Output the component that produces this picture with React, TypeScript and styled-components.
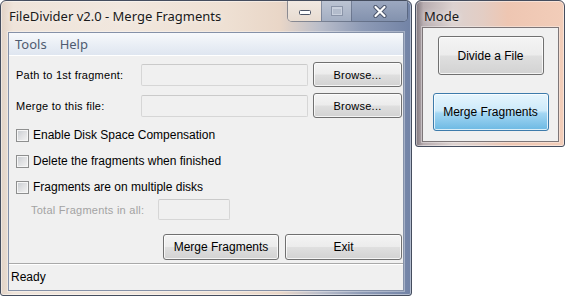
import React from "react";
import styled, { createGlobalStyle } from "styled-components";

const GlobalStyle = createGlobalStyle`
  html, body {
    margin: 0;
    padding: 0;
    background: #ffffff;
  }
  body {
    font-family: "Liberation Sans", Arial, sans-serif;
  }
`;

const Desktop = styled.div`
  display: flex;
  align-items: flex-start;
  gap: 3px;
  width: 565px;
  height: 297px;
  overflow: hidden;
`;

// aero-ish window frame, tone picks the glass tint
const Frame = styled.div<{ $w: number; $h: number; $tone: "main" | "mode" }>`
  box-sizing: border-box;
  width: ${(p) => p.$w}px;
  height: ${(p) => p.$h}px;
  display: flex;
  flex-direction: column;
  border: 1px solid #454d5e;
  border-radius: 6px 6px 3px 3px;
  padding: ${(p) => (p.$tone === "main" ? "0 7px 4px 7px" : "0 5px 4px 6px")};
  background: ${(p) =>
    p.$tone === "main"
      ? "linear-gradient(90deg, #e2d3c6 0%, #efe4da 3%, #f1e7de 30%, #eee0d3 55%, #e9d6c7 68%, #b9bdca 78%, #8e9bb6 88%, #7283a6 100%)"
      : "linear-gradient(90deg, #7f767c 0%, #b8adb0 5%, #dcd2d0 25%, #e3cdc4 45%, #eec6b2 62%, #f2cdb9 100%)"};
  box-shadow: inset 0 0 0 1px rgba(255, 255, 255, 0.45);
`;

const TitleBar = styled.div<{ $h: number }>`
  display: flex;
  justify-content: space-between;
  align-items: flex-start;
  height: ${(p) => p.$h}px;
  flex: none;
`;

const Title = styled.div<{ $pl?: number }>`
  font-family: "Noto Sans", "Open Sans", sans-serif;
  font-size: 13px;
  line-height: 18px;
  padding-top: 6px;
  padding-left: ${(p) => p.$pl ?? 1}px;
  color: #1a1a1a;
  white-space: nowrap;
  text-shadow: 0 0 6px rgba(255, 255, 255, 0.9);
`;

const Controls = styled.div`
  display: flex;
  margin-right: -4px;
  border: 1px solid rgba(70, 80, 100, 0.55);
  border-top: none;
  border-radius: 0 0 5px 5px;
  overflow: hidden;
  box-shadow: inset 0 0 0 1px rgba(255, 255, 255, 0.5);
`;

const CtrlBtn = styled.div<{ $w: number; $kind: "min" | "max" | "close" }>`
  width: ${(p) => p.$w}px;
  height: 20px;
  display: flex;
  align-items: center;
  justify-content: center;
  border-left: ${(p) => (p.$kind === "min" ? "none" : "1px solid rgba(70, 80, 100, 0.45)")};
  background: ${(p) =>
    p.$kind === "min"
      ? "linear-gradient(#f1e9e2, #e8dcd1)"
      : p.$kind === "max"
      ? "linear-gradient(#bcc4d3, #a3aec2)"
      : "linear-gradient(#9ca8c0, #8392ae)"};
`;

const Client = styled.div<{ $tone: "main" | "mode" }>`
  flex: 1;
  display: flex;
  flex-direction: column;
  background: #f0f0f0;
  border: 1px solid ${(p) => (p.$tone === "main" ? "#8591a8" : "#7d7678")};
  box-shadow: 0 0 0 1px rgba(255, 255, 255, 0.35);
  min-height: 0;
`;

const MenuBar = styled.div`
  display: flex;
  height: 22px;
  flex: none;
  align-items: center;
  background: linear-gradient(#f7f9fc 0%, #e9eef5 55%, #dfe6f0 100%);
  border-bottom: 1px solid #ffffff;
`;

const MenuItem = styled.span`
  font-family: "Noto Sans", "Open Sans", sans-serif;
  font-size: 13px;
  color: #4f5b70;
  padding: 0 7px 0 6px;
`;

const Form = styled.div`
  flex: 1;
  display: flex;
  flex-direction: column;
  padding: 6px 1px 3px 7px;
`;

const Row = styled.div<{ $h: number; $mt?: number }>`
  display: flex;
  align-items: center;
  height: ${(p) => p.$h}px;
  margin-top: ${(p) => p.$mt ?? 0}px;
  flex: none;
`;

const Label = styled.span<{ $w: number; $disabled?: boolean; $ml?: number }>`
  width: ${(p) => p.$w}px;
  margin-left: ${(p) => p.$ml ?? 0}px;
  flex: none;
  font-size: 11px;
  letter-spacing: 0.25px;
  color: ${(p) => (p.$disabled ? "#a3a3a3" : "#000000")};
  white-space: nowrap;
`;

const TextBox = styled.input<{ $w: number; $h: number }>`
  box-sizing: border-box;
  width: ${(p) => p.$w}px;
  height: ${(p) => p.$h}px;
  flex: none;
  margin: 0;
  padding: 0 3px;
  background: #f0f0f0;
  border: 1px solid #d6d6d6;
  border-top-color: #cacaca;
  border-radius: 2px;
  outline: none;
`;

const Button = styled.button<{ $w: number; $h: number; $ml?: number; $fs?: number; $selected?: boolean }>`
  box-sizing: border-box;
  width: ${(p) => p.$w}px;
  height: ${(p) => p.$h}px;
  margin-left: ${(p) => p.$ml ?? 0}px;
  flex: none;
  padding: 0;
  font-family: "Liberation Sans", Arial, sans-serif;
  font-size: ${(p) => p.$fs ?? 11}px;
  letter-spacing: ${(p) => ((p.$fs ?? 11) === 11 ? "0.25px" : "0")};
  color: #000;
  border: 1px solid ${(p) => (p.$selected ? "#3d7bab" : "#707070")};
  border-radius: 3px;
  background: ${(p) =>
    p.$selected
      ? "linear-gradient(#e6f5fd 0%, #cdeafa 46%, #a3d6f3 54%, #6cb9e3 100%)"
      : "linear-gradient(#f4f4f4 0%, #ececec 48%, #dfdfdf 52%, #d2d2d2 100%)"};
  box-shadow: inset 0 0 0 1px rgba(255, 255, 255, 0.75);
`;

const CheckRow = styled.label<{ $mt: number }>`
  display: flex;
  align-items: center;
  height: 22px;
  margin-top: ${(p) => p.$mt}px;
  gap: 4px;
  font-size: 12px;
  color: #000;
  flex: none;
`;

const CheckBox = styled.span`
  box-sizing: border-box;
  width: 13px;
  height: 13px;
  flex: none;
  border: 1px solid #8e8f8f;
  background: linear-gradient(135deg, #c6cacf 0%, #dedfe1 45%, #f4f4f4 100%);
  box-shadow: inset 0 0 0 1px #f6f6f6;
`;

const ButtonRow = styled.div`
  display: flex;
  justify-content: flex-end;
  gap: 6px;
  margin-top: auto;
`;

const StatusBar = styled.div`
  height: 26px;
  flex: none;
  display: flex;
  align-items: center;
  padding-left: 2px;
  font-size: 12px;
  color: #000;
  border-top: 1px solid #a9a9a9;
  box-shadow: inset 0 1px 0 #ffffff;
`;

const ModeBody = styled.div`
  display: flex;
  flex-direction: column;
  align-items: center;
  gap: 18px;
  padding-top: 8px;
`;

const MinGlyph = () => (
  <svg width="12" height="8" viewBox="0 0 12 8">
    <rect x="0.5" y="3.5" width="11" height="4" rx="1" fill="#ffffff" stroke="#4d5566" />
  </svg>
);

const MaxGlyph = () => (
  <svg width="12" height="10" viewBox="0 0 12 10">
    <rect x="0.5" y="0.5" width="11" height="9" fill="#c9d0dd" stroke="#8a94a8" />
    <rect x="2" y="3" width="8" height="5" fill="#b3bccc" />
  </svg>
);

const CloseGlyph = () => (
  <svg width="14" height="13" viewBox="0 0 14 13">
    <path d="M2.5 2 L11.5 11 M11.5 2 L2.5 11" stroke="#4c566c" strokeWidth="4.2" strokeLinecap="round" />
    <path d="M2.5 2 L11.5 11 M11.5 2 L2.5 11" stroke="#ffffff" strokeWidth="2.2" strokeLinecap="round" />
  </svg>
);

const App = () => {
  return (
    <Desktop>
      <GlobalStyle />
      <Frame $w={412} $h={296} $tone="main">
        <TitleBar $h={31}>
          <Title>FileDivider v2.0 - Merge Fragments</Title>
          <Controls>
            <CtrlBtn $w={33} $kind="min">
              <MinGlyph />
            </CtrlBtn>
            <CtrlBtn $w={29} $kind="max">
              <MaxGlyph />
            </CtrlBtn>
            <CtrlBtn $w={55} $kind="close">
              <CloseGlyph />
            </CtrlBtn>
          </Controls>
        </TitleBar>
        <Client $tone="main">
          <MenuBar>
            <MenuItem>Tools</MenuItem>
            <MenuItem>Help</MenuItem>
          </MenuBar>
          <Form>
            <Row $h={25}>
              <Label $w={125}>Path to 1st fragment:</Label>
              <TextBox $w={167} $h={22} disabled />
              <Button $w={89} $h={25} $ml={5}>Browse...</Button>
            </Row>
            <Row $h={25} $mt={6}>
              <Label $w={125}>Merge to this file:</Label>
              <TextBox $w={167} $h={22} disabled />
              <Button $w={89} $h={25} $ml={5}>Browse...</Button>
            </Row>
            <CheckRow $mt={6}>
              <CheckBox />
              Enable Disk Space Compensation
            </CheckRow>
            <CheckRow $mt={4}>
              <CheckBox />
              Delete the fragments when finished
            </CheckRow>
            <CheckRow $mt={4}>
              <CheckBox />
              Fragments are on multiple disks
            </CheckRow>
            <Row $h={21} $mt={1}>
              <Label $w={127} $ml={15} $disabled>
                Total Fragments in all:
              </Label>
              <TextBox $w={72} $h={21} disabled />
            </Row>
            <ButtonRow>
              <Button $w={116} $h={26} $fs={12}>Merge Fragments</Button>
              <Button $w={117} $h={26} $fs={12}>Exit</Button>
            </ButtonRow>
          </Form>
          <StatusBar>Ready</StatusBar>
        </Client>
      </Frame>

      <Frame $w={150} $h={147} $tone="mode">
        <TitleBar $h={26}>
          <Title $pl={2}>Mode</Title>
        </TitleBar>
        <Client $tone="mode">
          <ModeBody>
            <Button $w={106} $h={39} $fs={12}>Divide a File</Button>
            <Button $w={116} $h={38} $fs={12} $selected>
              Merge Fragments
            </Button>
          </ModeBody>
        </Client>
      </Frame>
    </Desktop>
  );
};

export default App;
